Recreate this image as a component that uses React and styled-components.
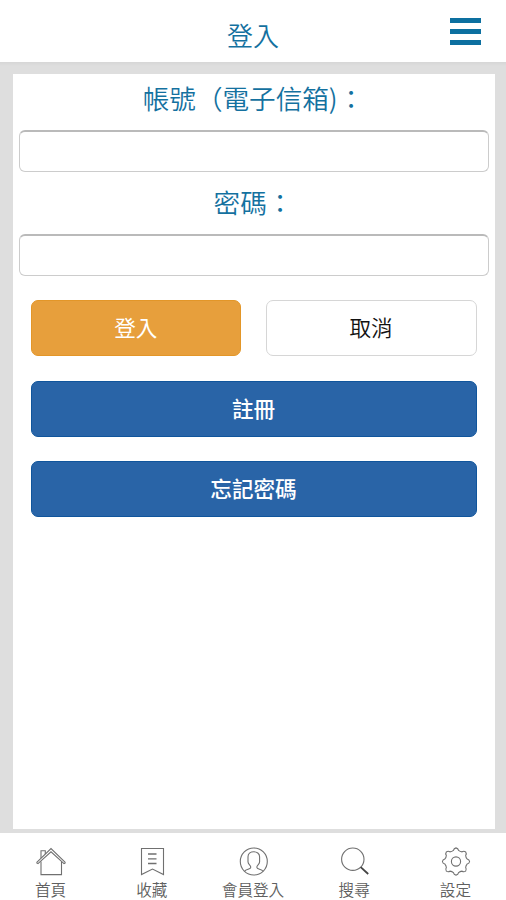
import React from "react";
import styled, { createGlobalStyle } from "styled-components";

const teal = "#14719f";
const gray = "#dedede";

const GlobalStyle = createGlobalStyle`
* {
    box-sizing: border-box;
}
body {
    margin: 0;
    background: #ffffff;
    font-family: "Noto Sans CJK TC", "Noto Sans", sans-serif;
}
`;

const StyledPage = styled.div`
display: flex;
flex-direction: column;
height: 900px;
overflow: hidden;
`;

const StyledHeader = styled.header`
display: grid;
grid-template-columns: 1fr auto 1fr;
height: 62px;
flex: none;
`;

const StyledTitle = styled.h1`
grid-column: 2;
margin: 16px 0 0;
font-size: 26px;
line-height: 38px;
font-weight: 350;
color: ${teal};
`;

const StyledMenuButton = styled.button`
display: flex;
flex-direction: column;
gap: 6px;
justify-self: end;
align-self: start;
width: 31px;
margin: 18px 25px 0 0;
padding: 0;
border: 0;
background: none;
`;

const StyledMenuBar = styled.span`
height: 5px;
background: #0d70a0;
`;

const StyledMain = styled.main`
flex: 1;
padding: 12px 11.5px 4px 12.5px;
background: linear-gradient(#d6d6d6, ${gray} 4px);
`;

const StyledPanel = styled.form`
height: 100%;
padding: 0 6px;
background: #ffffff;
`;

const StyledLabel = styled.label`
display: block;
height: 56px;
padding-top: 5px;
font-size: 26.6px;
line-height: 38px;
font-weight: 350;
text-align: center;
white-space: nowrap;
color: ${teal};
`;

const StyledInput = styled.input`
display: block;
width: 100%;
height: 42px;
margin-bottom: ${(props) => props.$gap}px;
border: 1px solid #cccccc;
border-top: 2px solid #bababa;
border-radius: 6px;
background: #ffffff;
outline: none;
`;

const StyledActions = styled.div`
display: grid;
grid-template-columns: 1fr 1fr;
gap: 24.5px;
padding: 0 12px;
`;

const variants = {
  orange: { fill: "#e79f3c", edge: "#e39628", text: "#ffffff", weight: 400 },
  plain: { fill: "#ffffff", edge: "#d6d6d6", text: "#111111", weight: 350 },
  blue: { fill: "#2964a7", edge: "#10559c", text: "#ffffff", weight: 500 },
};

const StyledButton = styled.button`
grid-column: ${(props) => (props.$wide ? "span 2" : "auto")};
height: 56px;
padding: 0 0 3px;
border: 1.5px solid ${(props) => variants[props.$variant].edge};
border-radius: 7px;
background: ${(props) => variants[props.$variant].fill};
color: ${(props) => variants[props.$variant].text};
font-family: inherit;
font-size: 21.6px;
font-weight: ${(props) => variants[props.$variant].weight};
`;

const StyledTabs = styled.nav`
display: grid;
grid-template-columns: repeat(5, 1fr);
flex: none;
height: 67px;
background: #ffffff;
`;

const StyledTab = styled.a`
display: flex;
flex-direction: column;
align-items: center;
padding-top: 13px;
font-size: 15.6px;
line-height: 24px;
font-weight: 350;
white-space: nowrap;
color: #606060;
svg {
    display: block;
    flex: none;
}
`;

function Icon({ children }) {
  return (
    <svg width="32" height="31" viewBox="0 0 32 31" fill="none" stroke="#707070" strokeWidth="1.1">
      {children}
    </svg>
  );
}

function HomeIcon() {
  return (
    <Icon>
      <path d="M1.5 16.7 L16 2.5 L30.5 16.7 M1.5 16.7 L3 17.6 L16 5.8 L29 17.6 L30.5 16.7" />
      <path d="M6 15.5 V28.6 H26.5 V15.5 M6 12 V4.8 H10.3 V8" />
    </Icon>
  );
}

function SavedIcon() {
  return (
    <Icon>
      <path d="M5.5 2.5 H27.5 V28.5 L16.5 23 L5.5 28.5 Z" />
      <path d="M12 8 H20.5 M12 12.8 H20.5 M12 17.5 H20.5" strokeWidth="1.3" />
    </Icon>
  );
}

function MemberIcon() {
  return (
    <Icon>
      <circle cx="16.8" cy="15.5" r="13.5" />
      <path d="M7.6 25.2 C9 22.8 13.8 23.4 13.8 21.2 C13.8 19 11 18.6 11 15.8 V10.8 C11 4 22.6 4 22.6 10.8 V15.8 C22.6 18.6 19.8 19 19.8 21.2 C19.8 23.4 24.6 22.8 26 25.2" />
    </Icon>
  );
}

function SearchIcon() {
  return (
    <Icon>
      <circle cx="14.8" cy="13.2" r="11.2" />
      <path d="M22.7 21.1 L30.2 28" stroke="#444444" strokeWidth="1.8" />
    </Icon>
  );
}

// Eight rounded teeth, one every 45 degrees
const gearPath =
  Array.from({ length: 8 }, (_, i) => {
    const at = (deg, r) => {
      const a = ((i * 45 + deg - 90) * Math.PI) / 180;
      return `${(17 + r * Math.cos(a)).toFixed(2)} ${(15.5 + r * Math.sin(a)).toFixed(2)}`;
    };
    return `${i ? "L" : "M"}${at(-13, 11.4)} Q${at(-9, 13.4)} ${at(0, 13.6)} Q${at(9, 13.4)} ${at(13, 11.4)} Q${at(22.5, 10.6)} ${at(32, 11.4)}`;
  }).join(" ") + " Z";

function SettingsIcon() {
  return (
    <Icon>
      <path d={gearPath} />
      <circle cx="17" cy="15.5" r="4.6" />
    </Icon>
  );
}

const tabs = [
  { label: "首頁", TabIcon: HomeIcon },
  { label: "收藏", TabIcon: SavedIcon },
  { label: "會員登入", TabIcon: MemberIcon },
  { label: "搜尋", TabIcon: SearchIcon },
  { label: "設定", TabIcon: SettingsIcon },
];

function App() {
  return (
    <StyledPage>
      <GlobalStyle />
      <StyledHeader>
        <StyledTitle>登入</StyledTitle>
        <StyledMenuButton type="button">
          <StyledMenuBar />
          <StyledMenuBar />
          <StyledMenuBar />
        </StyledMenuButton>
      </StyledHeader>
      <StyledMain>
        <StyledPanel>
          <StyledLabel htmlFor="account">帳號（電子信箱)：</StyledLabel>
          <StyledInput id="account" type="email" $gap={6} />
          <StyledLabel htmlFor="password">密碼：</StyledLabel>
          <StyledInput id="password" type="password" $gap={24} />
          <StyledActions>
            <StyledButton type="button" $variant="orange">登入</StyledButton>
            <StyledButton type="button" $variant="plain">取消</StyledButton>
            <StyledButton type="button" $variant="blue" $wide>註冊</StyledButton>
            <StyledButton type="button" $variant="blue" $wide>忘記密碼</StyledButton>
          </StyledActions>
        </StyledPanel>
      </StyledMain>
      <StyledTabs>
        {tabs.map(({ label, TabIcon }) => (
          <StyledTab key={label}>
            <TabIcon />
            {label}
          </StyledTab>
        ))}
      </StyledTabs>
    </StyledPage>
  );
}

export default App;
